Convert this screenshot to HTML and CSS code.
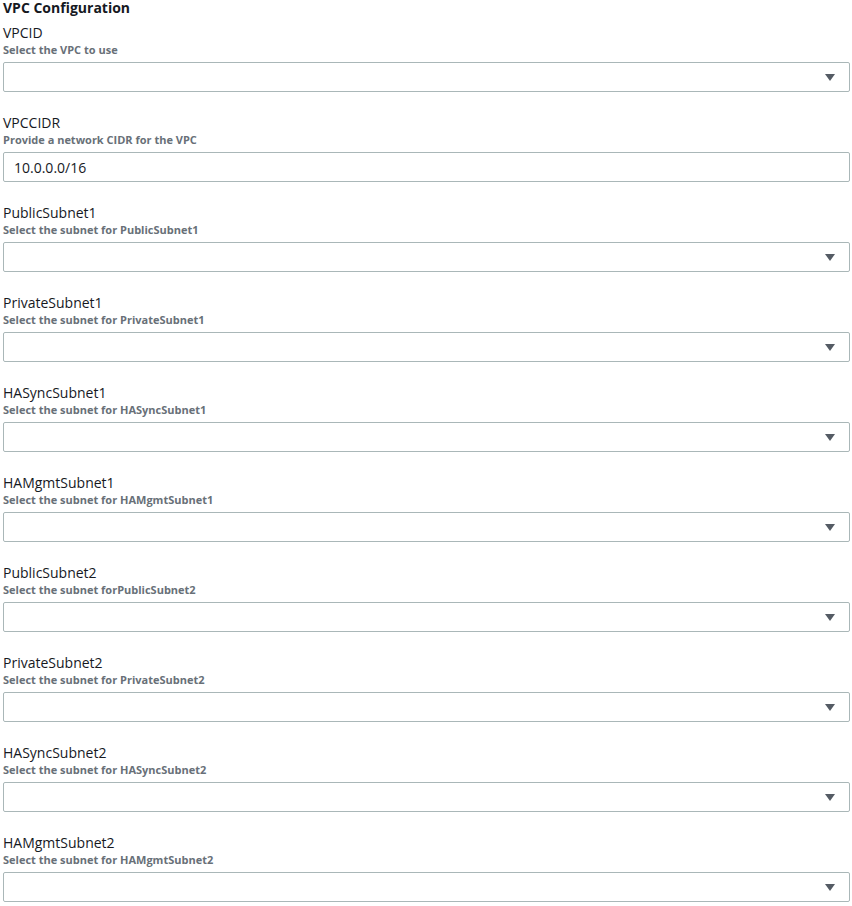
FILE: index.html
```html
<!DOCTYPE html>
<html lang="en">
<head>
<meta charset="utf-8">
<title>VPC Configuration</title>
<link rel="stylesheet" href="styles.css">
</head>
<body>
<div class="form">
  <h2 class="heading">VPC Configuration</h2>

  <div class="field">
    <div class="label">VPCID</div>
    <div class="desc">Select the VPC to use</div>
    <div class="control select"><span class="arrow"></span></div>
  </div>

  <div class="field">
    <div class="label">VPCCIDR</div>
    <div class="desc">Provide a network CIDR for the VPC</div>
    <div class="control input">10.0.0.0/16</div>
  </div>

  <div class="field">
    <div class="label">PublicSubnet1</div>
    <div class="desc">Select the subnet for PublicSubnet1</div>
    <div class="control select"><span class="arrow"></span></div>
  </div>

  <div class="field">
    <div class="label">PrivateSubnet1</div>
    <div class="desc">Select the subnet for PrivateSubnet1</div>
    <div class="control select"><span class="arrow"></span></div>
  </div>

  <div class="field">
    <div class="label">HASyncSubnet1</div>
    <div class="desc">Select the subnet for HASyncSubnet1</div>
    <div class="control select"><span class="arrow"></span></div>
  </div>

  <div class="field">
    <div class="label">HAMgmtSubnet1</div>
    <div class="desc">Select the subnet for HAMgmtSubnet1</div>
    <div class="control select"><span class="arrow"></span></div>
  </div>

  <div class="field">
    <div class="label">PublicSubnet2</div>
    <div class="desc">Select the subnet forPublicSubnet2</div>
    <div class="control select"><span class="arrow"></span></div>
  </div>

  <div class="field">
    <div class="label">PrivateSubnet2</div>
    <div class="desc">Select the subnet for PrivateSubnet2</div>
    <div class="control select"><span class="arrow"></span></div>
  </div>

  <div class="field">
    <div class="label">HASyncSubnet2</div>
    <div class="desc">Select the subnet for HASyncSubnet2</div>
    <div class="control select"><span class="arrow"></span></div>
  </div>

  <div class="field">
    <div class="label">HAMgmtSubnet2</div>
    <div class="desc">Select the subnet for HAMgmtSubnet2</div>
    <div class="control select"><span class="arrow"></span></div>
  </div>
</div>
</body>
</html>
```

FILE: styles.css
```css
html, body {
  margin: 0;
  padding: 0;
  background: #ffffff;
}

body {
  font-family: "Open Sans", "Noto Sans", sans-serif;
  color: #16191f;
}

.form {
  padding: 0 2px 0 3px;
  display: flex;
  flex-direction: column;
  gap: 22px;
}

.heading {
  margin: 0 0 -14px 0;
  font-size: 14px;
  line-height: 16px;
  font-weight: 700;
  color: #16191f;
}

.field {
  display: flex;
  flex-direction: column;
}

.label {
  font-size: 14px;
  line-height: 18px;
  color: #16191f;
}

.desc {
  font-size: 11px;
  line-height: 15px;
  font-weight: 700;
  color: #687078;
}

.control {
  margin-top: 5px;
  height: 30px;
  box-sizing: border-box;
  border: 1px solid #aab7b8;
  border-radius: 2px;
  background: #ffffff;
  display: flex;
  align-items: center;
}

.input {
  padding-left: 10px;
  font-size: 14px;
  color: #16191f;
}

.select {
  justify-content: flex-end;
  padding-right: 14px;
}

.arrow {
  width: 0;
  height: 0;
  border-left: 5px solid transparent;
  border-right: 5px solid transparent;
  border-top: 7px solid #545b64;
  margin-top: 1px;
}
```
